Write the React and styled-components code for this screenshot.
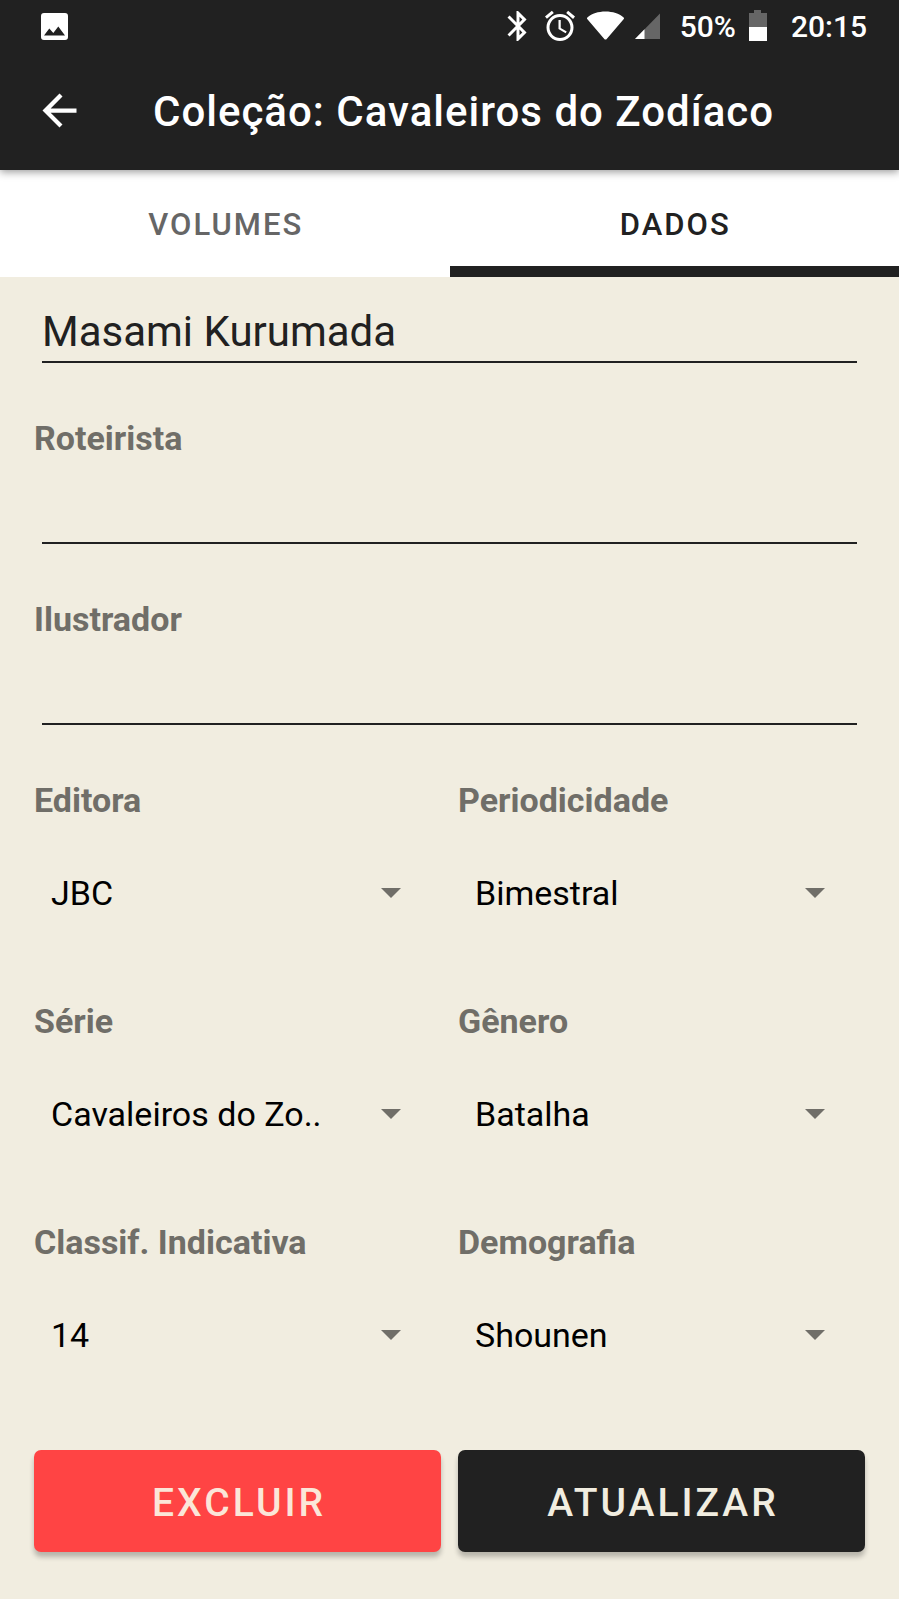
import React, { useState } from 'react';
import styled, { createGlobalStyle } from 'styled-components';
import { MdArrowBack, MdBluetooth, MdAccessAlarm } from 'react-icons/md';

const GlobalStyle = createGlobalStyle`
  *, *::before, *::after { box-sizing: border-box; }
  body {
    margin: 0;
    background: #f1ede0;
    font-family: Roboto, sans-serif;
    color: #212121;
  }
  button, input, select { font-family: inherit; }
`;

const Screen = styled.div`
  min-height: 100vh;
  display: flex;
  flex-direction: column;
`;

const Header = styled.header`
  position: relative;
  z-index: 1;
  background: #212121;
  color: #fff;
  box-shadow: 0 2px 8px rgba(0, 0, 0, 0.4);
`;

const StatusBar = styled.div`
  display: flex;
  align-items: center;
  justify-content: space-between;
  height: 52px;
  padding: 0 32px 0 40px;
`;

const StatusIcons = styled.div`
  display: flex;
  align-items: center;
  gap: 6px;
  svg { display: block; flex: none; }
`;

const StatusText = styled.span`
  margin-left: 10px;
  padding-top: 2px;
  font-size: 30px;
  line-height: 36px;
  font-weight: 500;
`;

const AppBar = styled.div`
  display: flex;
  align-items: center;
  gap: 68px;
  height: 118px;
  padding: 0 34px 2px;
`;

const BackButton = styled.button`
  display: flex;
  padding: 0;
  border: 0;
  background: none;
  color: inherit;
  cursor: pointer;
`;

const Title = styled.h1`
  margin: 0;
  padding-top: 4px;
  font-size: 42px;
  line-height: 50px;
  font-weight: 500;
  letter-spacing: 1px;
  white-space: nowrap;
`;

const Tabs = styled.div`
  display: flex;
  height: 107px;
  background: #fff;
`;

const Tab = styled.button`
  flex: 1;
  padding: 13px 0 0 2px;
  border: 0;
  border-bottom: 11px solid ${(p) => (p.$active ? '#212121' : 'transparent')};
  background: none;
  color: ${(p) => (p.$active ? '#212121' : '#666')};
  font-size: 31px;
  line-height: 36px;
  font-weight: 500;
  letter-spacing: 2px;
  text-transform: uppercase;
  cursor: pointer;
`;

const Form = styled.form`
  display: flex;
  flex-direction: column;
  gap: 55px;
  padding: 0 34px 47px;
`;

const Field = styled.div`
  display: flex;
  flex-direction: column;
`;

const Label = styled.label`
  font-size: 34px;
  line-height: 40px;
  font-weight: 700;
  color: #706e68;
`;

const TextInput = styled.input`
  height: 86px;
  margin: 0 8px;
  padding: 29px 0 5px;
  border: 0;
  border-bottom: 2px solid #212121;
  border-radius: 0;
  outline: 0;
  background: none;
  color: #212121;
  font-size: 42px;
  line-height: 50px;
`;

const SelectGrid = styled.div`
  display: grid;
  grid-template-columns: 1fr 1fr;
  gap: 35px 17px;
`;

const SelectBox = styled.div`
  display: grid;
  align-items: center;
  & > * { grid-area: 1 / 1; }
  svg {
    justify-self: end;
    margin-right: 40px;
    pointer-events: none;
  }
`;

const Select = styled.select`
  appearance: none;
  width: 100%;
  height: 146px;
  padding: 0 68px 0 17px;
  border: 0;
  outline: 0;
  background: none;
  color: #000;
  font-size: 34px;
  line-height: 40px;
`;

const Actions = styled.div`
  display: grid;
  grid-template-columns: 1fr 1fr;
  gap: 17px;
  margin-top: -13px;
`;

const ActionButton = styled.button`
  height: 102px;
  padding: 3px 0 0 3px;
  border: 0;
  border-radius: 7px;
  background: ${(p) => (p.$danger ? '#ff4444' : '#212121')};
  color: ${(p) => (p.$danger ? '#fbe6d8' : '#f1ede0')};
  box-shadow: 0 5px 5px rgba(0, 0, 0, 0.24);
  font-size: 39px;
  line-height: 46px;
  font-weight: 500;
  letter-spacing: 3px;
  text-transform: uppercase;
  cursor: pointer;
`;

const PictureIcon = () => (
  <svg width="29" height="29" viewBox="0 0 29 29" aria-hidden="true">
    <path
      fill="#fff"
      fillRule="evenodd"
      d="M4 1h21a3 3 0 0 1 3 3v21a3 3 0 0 1-3 3H4a3 3 0 0 1-3-3V4a3 3 0 0 1 3-3zM4 23.5h21L18.3 14.6l-5 6.4-4-4.6z"
    />
  </svg>
);

const WifiIcon = () => (
  <svg width="42" height="36" viewBox="0 0 42 36" aria-hidden="true">
    <path
      fill="#fff"
      d="M3.4 9.4C8 5.600 14.200 3.500 21.500 3.500s13.500 2.100 18.100 5.900c.5.400.6 1 .2 1.500L22.700 31c-.7.800-1.700.8-2.400 0L3.200 10.900c-.4-.5-.3-1.100.2-1.500z"
    />
  </svg>
);

const SignalIcon = () => (
  <svg width="32" height="36" viewBox="0 0 32 36" aria-hidden="true">
    <path fill="#666" d="M28 5.500V31H3z" />
    <path fill="#fff" d="M12.500 21.300V31H3z" />
  </svg>
);

const BatteryIcon = () => (
  <svg width="33" height="36" viewBox="3 0 33 36" aria-hidden="true">
    <path fill="#666" d="M15 2h7v3h6v14H10V5h5z" />
    <path fill="#fff" d="M10 19h18v14H10z" />
  </svg>
);

const CaretIcon = () => (
  <svg width="20" height="10" viewBox="0 0 20 10" aria-hidden="true">
    <path fill="#706e68" d="M0 0h20L10 10z" />
  </svg>
);

const SELECTS = [
  { id: 'editora', label: 'Editora', value: 'JBC' },
  { id: 'periodicidade', label: 'Periodicidade', value: 'Bimestral' },
  { id: 'serie', label: 'Série', value: 'Cavaleiros do Zo..' },
  { id: 'genero', label: 'Gênero', value: 'Batalha' },
  { id: 'classificacao', label: 'Classif. Indicativa', value: '14' },
  { id: 'demografia', label: 'Demografia', value: 'Shounen' },
];

export default function App() {
  const [tab, setTab] = useState('Dados');

  return (
    <Screen>
      <GlobalStyle />
      <Header>
        <StatusBar>
          <PictureIcon />
          <StatusIcons>
            <MdBluetooth size={36} />
            <MdAccessAlarm size={36} />
            <WifiIcon />
            <SignalIcon />
            <StatusText>50%</StatusText>
            <BatteryIcon />
            <StatusText>20:15</StatusText>
          </StatusIcons>
        </StatusBar>
        <AppBar>
          <BackButton type="button" aria-label="Voltar">
            <MdArrowBack size={51} />
          </BackButton>
          <Title>Coleção: Cavaleiros do Zodíaco</Title>
        </AppBar>
      </Header>
      <Tabs role="tablist">
        {['Volumes', 'Dados'].map((name) => (
          <Tab
            key={name}
            type="button"
            role="tab"
            aria-selected={tab === name}
            $active={tab === name}
            onClick={() => setTab(name)}
          >
            {name}
          </Tab>
        ))}
      </Tabs>
      <Form onSubmit={(e) => e.preventDefault()}>
        <Field>
          <TextInput aria-label="Autor" defaultValue="Masami Kurumada" />
        </Field>
        <Field>
          <Label htmlFor="roteirista">Roteirista</Label>
          <TextInput id="roteirista" />
        </Field>
        <Field>
          <Label htmlFor="ilustrador">Ilustrador</Label>
          <TextInput id="ilustrador" />
        </Field>
        <SelectGrid>
          {SELECTS.map(({ id, label, value }) => (
            <Field key={id}>
              <Label htmlFor={id}>{label}</Label>
              <SelectBox>
                <Select id={id} defaultValue={value}>
                  <option>{value}</option>
                </Select>
                <CaretIcon />
              </SelectBox>
            </Field>
          ))}
        </SelectGrid>
        <Actions>
          <ActionButton type="button" $danger>Excluir</ActionButton>
          <ActionButton type="submit">Atualizar</ActionButton>
        </Actions>
      </Form>
    </Screen>
  );
}
